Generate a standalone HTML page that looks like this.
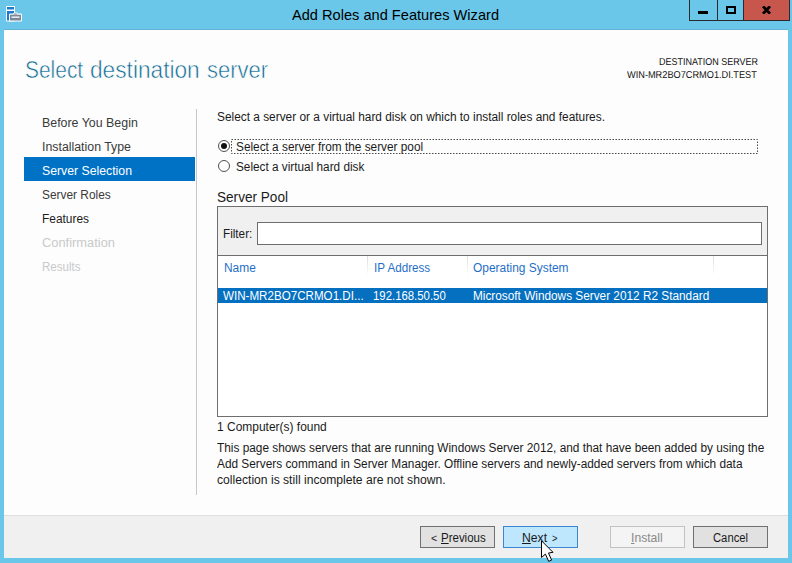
<!DOCTYPE html>
<html><head><meta charset="utf-8">
<style>
html,body{margin:0;padding:0;}
body{width:792px;height:563px;overflow:hidden;background:#6bc7ea;font-family:"Liberation Sans",sans-serif;position:relative;}
.t{position:absolute;white-space:nowrap;line-height:1;transform-origin:0 0;color:#1a1a1a;}
.t u{text-underline-offset:1px;}
#content{position:absolute;left:4px;top:30px;width:784px;height:486px;background:#fdfdfd;}
#footer{position:absolute;left:4px;top:515px;width:784px;height:43px;background:#f0f0f0;border-top:1px solid #dfdfdf;box-sizing:border-box;}
.abs{position:absolute;}
.btn{position:absolute;top:526px;height:22px;width:75px;box-sizing:border-box;border:1px solid #707070;background:#e1e1e1;}
</style></head><body>
<!-- title bar -->
<svg class="abs" style="left:5px;top:5px" width="20" height="18" viewBox="0 0 20 18">
 <rect x="1" y="1" width="9" height="15.6" rx="1" fill="#fff"/>
 <rect x="2" y="2" width="7" height="2.5" fill="#1b7bd0"/>
 <rect x="2" y="6" width="7" height="9.5" fill="#1b7bd0"/>
 <rect x="4" y="8.6" width="13" height="8" rx="1" fill="#fff"/>
 <path d="M8.3 9.4 L9 7.9 L11.8 7.9 L12.5 9.4" fill="#8593a0" stroke="#fff" stroke-width="1"/>
 <rect x="5" y="9.7" width="11" height="5.8" fill="#7b8a99"/>
 <rect x="6.5" y="11.5" width="8" height="1.3" fill="#fff"/>
</svg>
<div class="abs" style="left:689px;top:0;width:101px;height:21px;box-sizing:border-box;border:1px solid #2a2a2a;border-top:none;background:#6bc7ea"></div>
<div class="abs" style="left:743px;top:0;width:46px;height:20px;background:#c7564d"></div>
<div class="abs" style="left:717px;top:0;width:1px;height:20px;background:#2a2a2a"></div>
<div class="abs" style="left:743px;top:0;width:1px;height:20px;background:#2a2a2a"></div>
<div class="abs" style="left:698px;top:11px;width:10px;height:3px;background:#000"></div>
<div class="abs" style="left:726px;top:6px;width:10px;height:8px;box-sizing:border-box;border:2px solid #000"></div>
<svg class="abs" style="left:762px;top:6px" width="9" height="8" viewBox="0 0 9 8"><path d="M1 0.3 L8 7.7 M8 0.3 L1 7.7" stroke="#000" stroke-width="2.8"/></svg>

<div class="abs" style="left:4px;top:29px;width:784px;height:1px;background:#62b2d6"></div>
<div id="content"></div>
<div id="footer"></div>

<!-- sidebar -->
<div class="abs" style="left:24px;top:157px;width:171px;height:24px;background:#0072c6"></div>
<div class="abs" style="left:196px;top:109px;width:1px;height:386px;background:#c8c8c8"></div>

<!-- main -->
<div class="abs" style="left:218px;top:140.2px;width:12px;height:12px;box-sizing:border-box;border:1px solid #505050;border-radius:50%;background:#fff"></div>
<div class="abs" style="left:221px;top:143.2px;width:6px;height:6px;border-radius:50%;background:#111"></div>
<svg class="abs" style="left:231px;top:139px" width="527" height="15"><rect x="0.5" y="0.5" width="526" height="14" fill="none" stroke="#484848" stroke-width="1" stroke-dasharray="1.5 1.5"/></svg>
<div class="abs" style="left:218px;top:160.2px;width:12px;height:12px;box-sizing:border-box;border:1px solid #505050;border-radius:50%;background:#fff"></div>

<div class="abs" style="left:217px;top:206px;width:551px;height:211px;box-sizing:border-box;border:1px solid #6e6e6e;background:#fff"></div>
<div class="abs" style="left:218px;top:207px;width:549px;height:48px;background:#f0f0f0;border-bottom:1px solid #6e6e6e"></div>
<div class="abs" style="left:257px;top:222px;width:505px;height:23px;box-sizing:border-box;border:1px solid #6e6e6e;background:#fff"></div>
<div class="abs" style="left:367px;top:256px;width:1px;height:20px;background:linear-gradient(#dcdcdc,#fff)"></div>
<div class="abs" style="left:467px;top:256px;width:1px;height:20px;background:linear-gradient(#dcdcdc,#fff)"></div>
<div class="abs" style="left:713px;top:256px;width:1px;height:20px;background:linear-gradient(#dcdcdc,#fff)"></div>
<div class="abs" style="left:218px;top:288px;width:549px;height:14.6px;background:#0670c0"></div>

<!-- buttons -->
<div class="btn" style="left:420px"></div>
<div class="btn" style="left:503px;background:#bee6fd;border-color:#3c87d0"></div>
<div class="btn" style="left:610px;background:#f4f4f4;border-color:#c2c2c2"></div>
<div class="btn" style="left:693px"></div>
<div class="t" id="title" style="left:292.00px;top:7.00px;font-size:15px;color:#000;transform:scale(0.9737,1);">Add Roles and Features Wizard</div>
<div class="t" id="h1a" style="left:25.00px;top:59.00px;font-size:23.5px;color:#0c6a92;transform:scale(0.8904,1);-webkit-text-stroke:0.55px #fdfdfd;">Select</div>
<div class="t" id="h1b" style="left:90.00px;top:59.00px;font-size:23.5px;color:#0c6a92;transform:scale(0.9654,1);-webkit-text-stroke:0.55px #fdfdfd;">destination</div>
<div class="t" id="h1c" style="left:207.00px;top:59.00px;font-size:23.5px;color:#0c6a92;transform:scale(0.9352,1);-webkit-text-stroke:0.55px #fdfdfd;">server</div>
<div class="t" id="ds1" style="left:659.00px;top:58.00px;font-size:10px;color:#111;transform:scale(0.8987,1);text-rendering:geometricPrecision;">DESTINATION SERVER</div>
<div class="t" id="ds2" style="left:627.00px;top:71.00px;font-size:10px;color:#111;transform:scale(0.9204,1);text-rendering:geometricPrecision;">WIN-MR2BO7CRMO1.DI.TEST</div>
<div class="t" id="sb1" style="left:42.00px;top:117.00px;font-size:12.5px;color:#3a3a3a;transform:scale(0.9914,1);">Before You Begin</div>
<div class="t" id="sb2" style="left:42.00px;top:141.00px;font-size:12.5px;color:#3a3a3a;transform:scale(0.9874,1);">Installation Type</div>
<div class="t" id="sb3" style="left:42.00px;top:165.00px;font-size:12.5px;color:#fff;transform:scale(0.9812,1);">Server Selection</div>
<div class="t" id="sb4" style="left:42.00px;top:189.00px;font-size:12.5px;color:#3a3a3a;transform:scale(0.9512,1);">Server Roles</div>
<div class="t" id="sb5" style="left:42.00px;top:213.00px;font-size:12.5px;color:#1c1c1c;transform:scale(0.9543,1);">Features</div>
<div class="t" id="sb6" style="left:42.00px;top:237.00px;font-size:12.5px;color:#c9c9c9;transform:scale(1.0296,1);">Confirmation</div>
<div class="t" id="sb7" style="left:42.00px;top:261.00px;font-size:12.5px;color:#c9c9c9;transform:scale(0.9252,1);">Results</div>
<div class="t" id="m1" style="left:217.00px;top:111.00px;font-size:12px;color:#1a1a1a;transform:scale(0.9892,1);">Select a server or a virtual hard disk on which to install roles and features.</div>
<div class="t" id="r1" style="left:236.00px;top:141.00px;font-size:12px;color:#1a1a1a;transform:scale(0.9845,1);">Select a server from the server pool</div>
<div class="t" id="r2" style="left:236.00px;top:161.00px;font-size:12px;color:#1a1a1a;transform:scale(0.9817,1);">Select a virtual hard disk</div>
<div class="t" id="sp" style="left:217.00px;top:190.00px;font-size:14px;color:#1a1a1a;transform:scale(0.9705,1);">Server Pool</div>
<div class="t" id="fl" style="left:223.00px;top:228.00px;font-size:12px;color:#1a1a1a;transform:scale(0.9761,1);">Filter:</div>
<div class="t" id="c1" style="left:224.00px;top:262.00px;font-size:12px;color:#1f6fc9;transform:scale(0.9937,1);">Name</div>
<div class="t" id="c2" style="left:374.00px;top:262.00px;font-size:12px;color:#1f6fc9;transform:scale(0.9720,1);">IP Address</div>
<div class="t" id="c3" style="left:473.00px;top:262.00px;font-size:12px;color:#1f6fc9;transform:scale(0.9951,1);">Operating System</div>
<div class="t" id="d1" style="left:223.00px;top:290.00px;font-size:12px;color:#fff;transform:scale(0.9674,1);">WIN-MR2BO7CRMO1.DI...</div>
<div class="t" id="d2" style="left:373.00px;top:290.00px;font-size:12px;color:#fff;transform:scale(0.9478,1);">192.168.50.50</div>
<div class="t" id="d3" style="left:473.00px;top:290.00px;font-size:12px;color:#fff;transform:scale(0.9837,1);">Microsoft Windows Server 2012 R2 Standard</div>
<div class="t" id="cf" style="left:217.00px;top:421.00px;font-size:12px;color:#1a1a1a;transform:scale(0.9974,1);">1 Computer(s) found</div>
<div class="t" id="p1" style="left:217.00px;top:442.00px;font-size:12px;color:#1a1a1a;transform:scale(0.9860,1);">This page shows servers that are running Windows Server 2012, and that have been added by using the</div>
<div class="t" id="p2" style="left:217.00px;top:458.00px;font-size:12px;color:#1a1a1a;transform:scale(0.9865,1);">Add Servers command in Server Manager. Offline servers and newly-added servers from which data</div>
<div class="t" id="p3" style="left:217.00px;top:474.00px;font-size:12px;color:#1a1a1a;transform:scale(1.0107,1);">collection is still incomplete are not shown.</div>
<div class="t" id="b1a" style="left:431.00px;top:533.00px;font-size:11px;color:#1a1a1a;transform:scale(0.9577,1);">&lt;</div>
<div class="t" id="b1b" style="left:441.00px;top:532.00px;font-size:12px;color:#1a1a1a;transform:scale(0.9568,1);"><u>P</u>revious</div>
<div class="t" id="b2a" style="left:522.00px;top:532.00px;font-size:12px;color:#1a1a1a;transform:scale(1.0132,1);"><u>N</u>ext</div>
<div class="t" id="b2b" style="left:552.00px;top:533.00px;font-size:11px;color:#1a1a1a;transform:scale(0.8496,1);">&gt;</div>
<div class="t" id="b3" style="left:631.00px;top:532.00px;font-size:12px;color:#8a8a8a;transform:scale(1.0117,1);"><u>I</u>nstall</div>
<div class="t" id="b4" style="left:713.00px;top:532.00px;font-size:12px;color:#1a1a1a;transform:scale(0.9373,1);">Cancel</div>
<svg class="abs" style="left:541px;top:540px" width="14" height="24" viewBox="0 0 14 24"><path d="M0.5 0.8 L0.5 17.5 L4.4 14.1 L7.7 21.3 L10.6 20.1 L7.5 13 L12 12.3 Z" fill="#fff" stroke="#000" stroke-width="1" stroke-linejoin="miter"/></svg>
</body></html>
